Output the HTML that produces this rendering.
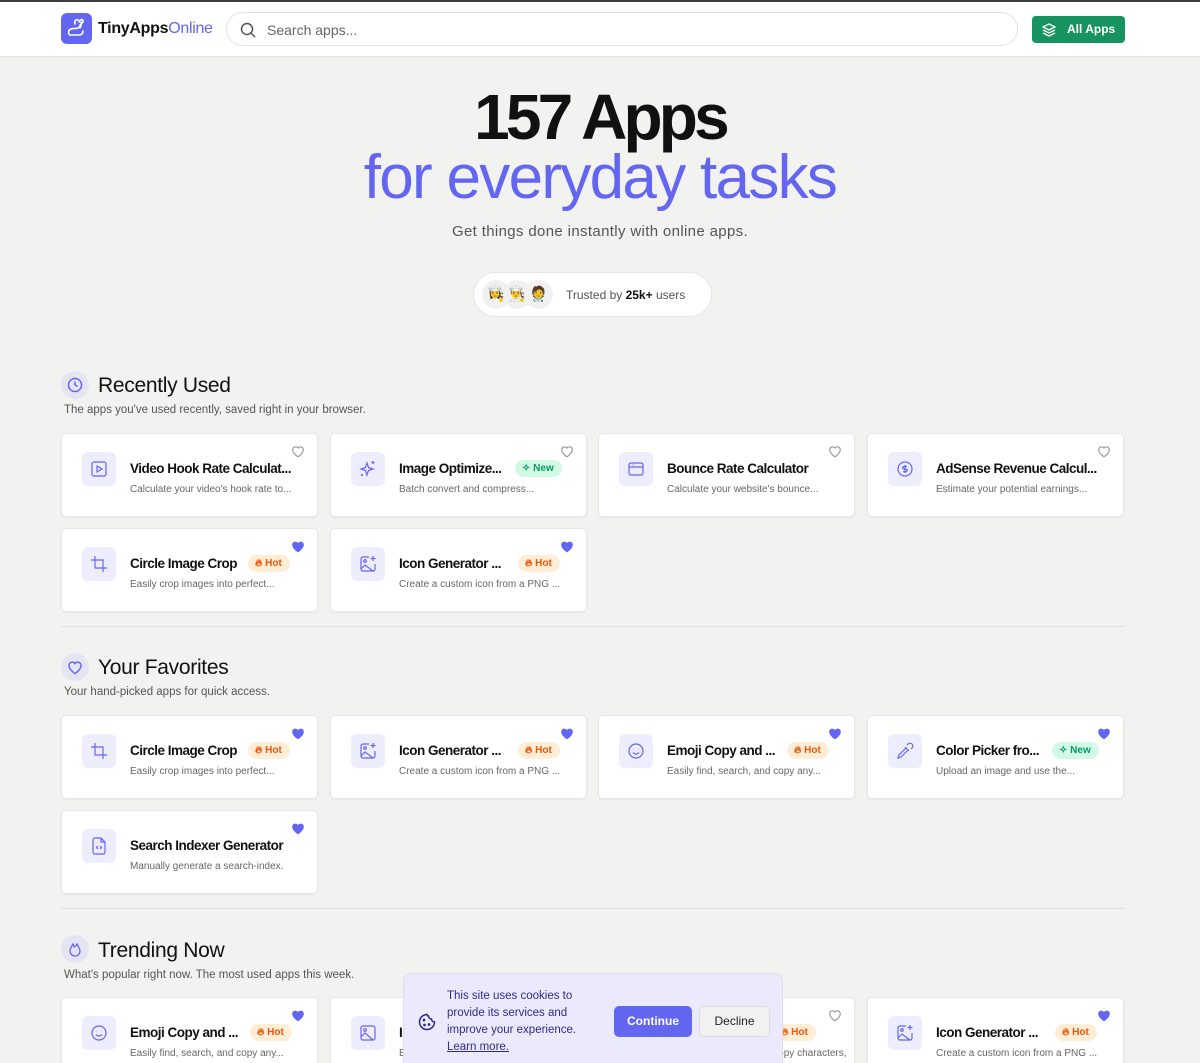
<!DOCTYPE html>
<html><head><meta charset="utf-8">
<style>
*{box-sizing:border-box;margin:0;padding:0}
html,body{width:1200px;height:1063px;overflow:hidden}
body{background:#f2f2f0;font-family:"Liberation Sans",sans-serif;color:#111;position:relative}
.abs{position:absolute}
.hdr{left:0;top:0;width:1200px;height:57px;background:#fff;border-top:2px solid #3b3f3b;border-bottom:1px solid #e3e3e3}
.logo{left:61px;top:13px;width:31px;height:31px;border-radius:6px;background:#6366f1}
.brand{left:98px;top:20px;font-size:16px;font-weight:700;letter-spacing:-.3px}
.brand span{color:#6366f1;font-weight:400}
.search{left:226px;top:12px;width:792px;height:34px;border:1px solid #e2e2e2;border-radius:17px;background:#fff}
.search span{position:absolute;left:40px;top:9px;font-size:14px;color:#666}
.allbtn{left:1032px;top:16px;width:93px;height:27px;background:#16935e;border-radius:4px;color:#fff;font-size:12px;font-weight:700}
.h1{left:0;width:1200px;text-align:center;top:82px;font-size:64px;font-weight:700;letter-spacing:-3.8px;line-height:70px}
.h2{left:0;width:1200px;text-align:center;top:143px;font-size:62px;color:#6366f1;letter-spacing:-1.7px;line-height:70px}
.sub{left:0;width:1200px;text-align:center;top:223px;font-size:15px;color:#555;letter-spacing:.35px}
.pill{left:473px;top:272px;width:239px;height:45px;background:#fff;border:1px solid #e6e6e6;border-radius:23px}
.av{position:absolute;top:7px;width:29px;height:29px;border-radius:50%;background:#f1f1f1;font-size:15px;text-align:center;line-height:29px}
.pill .t{position:absolute;left:92px;top:15px;font-size:12px;color:#555}
.pill b{color:#111}
.sh{font-size:21px;letter-spacing:-.3px;left:98px}
.sc{left:61px;width:28px;height:28px;border-radius:50%;background:#e4e4f3}
.ss{left:64px;font-size:11.5px;color:#555}
.div{left:61px;width:1064px;height:1px;background:#e0e0e0}
.card{position:absolute;width:257px;height:84px;background:#fff;border:1px solid #e6e6e6;border-radius:5px;box-shadow:0 1px 2px rgba(0,0,0,.05)}
.ic{position:absolute;left:20px;top:18px;width:34px;height:34px;border-radius:6px;background:#eeedfd}
.ic svg{position:absolute;left:8px;top:8px}
.ti{position:absolute;left:68px;top:27px;font-size:13.5px;font-weight:700;letter-spacing:-.5px;white-space:nowrap}
.de{position:absolute;left:68px;top:50px;font-size:10px;color:#666;white-space:nowrap}
.hr{position:absolute;right:12px;top:11px}
.bd{position:absolute;top:26px;height:17px;border-radius:9px;font-size:10px;line-height:17px;padding:0 8px 0 7px;font-weight:700}
.hot{background:#ffedd5;color:#ea580c}
.new{background:#d1fae5;color:#059669}
.cookie{left:403px;top:973px;width:380px;height:100px;background:#ebeafc;border:1px solid #dcdcf0;border-radius:8px}
</style></head><body>
<div class="abs hdr"></div>
<div class="abs logo"><svg width="31" height="31" viewBox="0 0 31 31" fill="none" stroke="#fff" stroke-width="1.6" stroke-linecap="round"><path d="M9 22c-2-1-2-5 1-6 2-1 5 0 7-1 3-1 4-4 3-6M14 11c-1-3 1-5 3-4M18 9c1-3 4-3 4-1 0 2-2 3-3 4M10 22h8c2 0 4-1 4-4"/><circle cx="19" cy="14" r=".6" fill="#fff"/></svg></div>
<div class="abs brand">TinyApps<span>Online</span></div>
<div class="abs search"><svg class="abs" style="left:13px;top:9px" width="16" height="16" viewBox="0 0 16 16" fill="none" stroke="#555" stroke-width="1.5"><circle cx="7" cy="7" r="5.5"/><path d="M11 11l4 4"/></svg><span>Search apps...</span></div>
<div class="abs allbtn"><svg class="abs" style="left:10px;top:7px" width="14" height="14" viewBox="0 0 14 14" fill="none" stroke="#fff" stroke-width="1.3"><path d="M7 1L1 4l6 3 6-3zM1 7l6 3 6-3M1 10l6 3 6-3"/></svg><span class="abs" style="left:35px;top:6px">All Apps</span></div>

<div class="abs h1">157 Apps</div>
<div class="abs h2">for everyday tasks</div>
<div class="abs sub">Get things done instantly with online apps.</div>
<div class="abs pill"><div class="av" style="left:8px">👩‍🍳</div><div class="av" style="left:29px">👨‍🍳</div><div class="av" style="left:50px">🧑‍⚕️</div><div class="t">Trusted by <b>25k+</b> users</div></div>

<!-- Recently Used -->
<div class="abs sc" style="top:371px"><svg style="position:absolute;left:6px;top:6px" width="16" height="16" viewBox="0 0 16 16" fill="none" stroke="#6366f1" stroke-width="1.5"><circle cx="8" cy="8" r="6.5"/><path d="M8 4.5V8l2.5 1.5"/></svg></div>
<div class="abs sh" style="top:374px">Recently Used</div>
<div class="abs ss" style="top:404px">The apps you've used recently, saved right in your browser.</div>

<div class="card" style="left:61px;top:433px"><div class="ic"><svg width="18" height="18" viewBox="0 0 18 18" fill="none" stroke="#6366f1" stroke-width="1.2"><rect x="2" y="2" width="14" height="14" rx="2"/><path d="M7 6l5 3-5 3z"/></svg></div><div class="ti">Video Hook Rate Calculat...</div><div class="de">Calculate your video's hook rate to...</div><svg class="hr" width="14" height="13" viewBox="0 0 24 22" fill="none" stroke="#999" stroke-width="2"><path d="M12 20s-9-5.5-9-12a5 5 0 0 1 9-3 5 5 0 0 1 9 3c0 6.5-9 12-9 12z"/></svg></div>
<div class="card" style="left:330px;top:433px"><div class="ic"><svg width="18" height="18" viewBox="0 0 18 18" fill="none" stroke="#6366f1" stroke-width="1.2"><path d="M8 3l1.5 4.5L14 9l-4.5 1.5L8 15l-1.5-4.5L2 9l4.5-1.5zM14 1v3M12.5 2.5h3M3 14v2M2 15h2"/></svg></div><div class="ti">Image Optimize...</div><span class="bd new" style="left:184px">✧ New</span><div class="de">Batch convert and compress...</div><svg class="hr" width="14" height="13" viewBox="0 0 24 22" fill="none" stroke="#999" stroke-width="2"><path d="M12 20s-9-5.5-9-12a5 5 0 0 1 9-3 5 5 0 0 1 9 3c0 6.5-9 12-9 12z"/></svg></div>
<div class="card" style="left:598px;top:433px"><div class="ic"><svg width="18" height="18" viewBox="0 0 18 18" fill="none" stroke="#6366f1" stroke-width="1.2"><rect x="2" y="3" width="14" height="12" rx="2"/><path d="M2 7h14M5 5h.5M7 5h.5"/></svg></div><div class="ti">Bounce Rate Calculator</div><div class="de">Calculate your website's bounce...</div><svg class="hr" width="14" height="13" viewBox="0 0 24 22" fill="none" stroke="#999" stroke-width="2"><path d="M12 20s-9-5.5-9-12a5 5 0 0 1 9-3 5 5 0 0 1 9 3c0 6.5-9 12-9 12z"/></svg></div>
<div class="card" style="left:867px;top:433px"><div class="ic"><svg width="18" height="18" viewBox="0 0 18 18" fill="none" stroke="#6366f1" stroke-width="1.2"><circle cx="9" cy="9" r="7"/><path d="M11 6.5H8a1.3 1.3 0 0 0 0 2.6h2a1.3 1.3 0 0 1 0 2.6H7M9 5v8"/></svg></div><div class="ti">AdSense Revenue Calcul...</div><div class="de">Estimate your potential earnings...</div><svg class="hr" width="14" height="13" viewBox="0 0 24 22" fill="none" stroke="#999" stroke-width="2"><path d="M12 20s-9-5.5-9-12a5 5 0 0 1 9-3 5 5 0 0 1 9 3c0 6.5-9 12-9 12z"/></svg></div>

<div class="card" style="left:61px;top:528px"><div class="ic"><svg width="18" height="18" viewBox="0 0 18 18" fill="none" stroke="#6366f1" stroke-width="1.2"><path d="M5 1v12h12M1 5h12v12"/></svg></div><div class="ti">Circle Image Crop</div><span class="bd hot" style="left:186px">🔥︎ Hot</span><div class="de">Easily crop images into perfect...</div><svg class="hr" width="14" height="13" viewBox="0 0 24 22" fill="#6366f1"><path d="M12 21s-10-6-10-13a5.5 5.5 0 0 1 10-3 5.5 5.5 0 0 1 10 3c0 7-10 13-10 13z"/></svg></div>
<div class="card" style="left:330px;top:528px"><div class="ic"><svg width="18" height="18" viewBox="0 0 18 18" fill="none" stroke="#6366f1" stroke-width="1.2"><path d="M10 2H4a2 2 0 0 0-2 2v10a2 2 0 0 0 2 2h10a2 2 0 0 0 2-2V9M2 14l4-4 8 6M14 1v5M11.5 3.5h5"/><circle cx="6" cy="6" r="1.3"/></svg></div><div class="ti">Icon Generator ...</div><span class="bd hot" style="left:187px">🔥︎ Hot</span><div class="de">Create a custom icon from a PNG ...</div><svg class="hr" width="14" height="13" viewBox="0 0 24 22" fill="#6366f1"><path d="M12 21s-10-6-10-13a5.5 5.5 0 0 1 10-3 5.5 5.5 0 0 1 10 3c0 7-10 13-10 13z"/></svg></div>

<div class="abs div" style="top:626px"></div>

<!-- Favorites -->
<div class="abs sc" style="top:653px"><svg style="position:absolute;left:6px;top:7px" width="16" height="15" viewBox="0 0 24 22" fill="none" stroke="#6366f1" stroke-width="2.2"><path d="M12 20s-9-5.5-9-12a5 5 0 0 1 9-3 5 5 0 0 1 9 3c0 6.5-9 12-9 12z"/></svg></div>
<div class="abs sh" style="top:656px">Your Favorites</div>
<div class="abs ss" style="top:686px">Your hand-picked apps for quick access.</div>

<div class="card" style="left:61px;top:715px"><div class="ic"><svg width="18" height="18" viewBox="0 0 18 18" fill="none" stroke="#6366f1" stroke-width="1.2"><path d="M5 1v12h12M1 5h12v12"/></svg></div><div class="ti">Circle Image Crop</div><span class="bd hot" style="left:186px">🔥︎ Hot</span><div class="de">Easily crop images into perfect...</div><svg class="hr" width="14" height="13" viewBox="0 0 24 22" fill="#6366f1"><path d="M12 21s-10-6-10-13a5.5 5.5 0 0 1 10-3 5.5 5.5 0 0 1 10 3c0 7-10 13-10 13z"/></svg></div>
<div class="card" style="left:330px;top:715px"><div class="ic"><svg width="18" height="18" viewBox="0 0 18 18" fill="none" stroke="#6366f1" stroke-width="1.2"><path d="M10 2H4a2 2 0 0 0-2 2v10a2 2 0 0 0 2 2h10a2 2 0 0 0 2-2V9M2 14l4-4 8 6M14 1v5M11.5 3.5h5"/><circle cx="6" cy="6" r="1.3"/></svg></div><div class="ti">Icon Generator ...</div><span class="bd hot" style="left:187px">🔥︎ Hot</span><div class="de">Create a custom icon from a PNG ...</div><svg class="hr" width="14" height="13" viewBox="0 0 24 22" fill="#6366f1"><path d="M12 21s-10-6-10-13a5.5 5.5 0 0 1 10-3 5.5 5.5 0 0 1 10 3c0 7-10 13-10 13z"/></svg></div>
<div class="card" style="left:598px;top:715px"><div class="ic"><svg width="18" height="18" viewBox="0 0 18 18" fill="none" stroke="#6366f1" stroke-width="1.2"><circle cx="9" cy="9" r="7"/><path d="M6 10.5c1.5 2 4.5 2 6 0M6.5 7h.3M11.2 7h.3"/></svg></div><div class="ti">Emoji Copy and ...</div><span class="bd hot" style="left:188px">🔥︎ Hot</span><div class="de">Easily find, search, and copy any...</div><svg class="hr" width="14" height="13" viewBox="0 0 24 22" fill="#6366f1"><path d="M12 21s-10-6-10-13a5.5 5.5 0 0 1 10-3 5.5 5.5 0 0 1 10 3c0 7-10 13-10 13z"/></svg></div>
<div class="card" style="left:867px;top:715px"><div class="ic"><svg width="18" height="18" viewBox="0 0 18 18" fill="none" stroke="#6366f1" stroke-width="1.2"><path d="M2 16l1-3 7-7 2 2-7 7zM9 5l4 4M11 3l1-1a1.5 1.5 0 0 1 4 4l-1 1"/></svg></div><div class="ti">Color Picker fro...</div><span class="bd new" style="left:184px">✧ New</span><div class="de">Upload an image and use the...</div><svg class="hr" width="14" height="13" viewBox="0 0 24 22" fill="#6366f1"><path d="M12 21s-10-6-10-13a5.5 5.5 0 0 1 10-3 5.5 5.5 0 0 1 10 3c0 7-10 13-10 13z"/></svg></div>
<div class="card" style="left:61px;top:810px"><div class="ic"><svg width="18" height="18" viewBox="0 0 18 18" fill="none" stroke="#6366f1" stroke-width="1.2"><path d="M11 1H5a2 2 0 0 0-2 2v12a2 2 0 0 0 2 2h8a2 2 0 0 0 2-2V5zM11 1v4h4M8 9l-1.5 1.5L8 12M10 9l1.5 1.5L10 12"/></svg></div><div class="ti">Search Indexer Generator</div><div class="de">Manually generate a search-index.</div><svg class="hr" width="14" height="13" viewBox="0 0 24 22" fill="#6366f1"><path d="M12 21s-10-6-10-13a5.5 5.5 0 0 1 10-3 5.5 5.5 0 0 1 10 3c0 7-10 13-10 13z"/></svg></div>

<div class="abs div" style="top:908px"></div>

<!-- Trending -->
<div class="abs sc" style="top:935px"><svg style="position:absolute;left:7px;top:6px" width="14" height="16" viewBox="0 0 14 16" fill="none" stroke="#6366f1" stroke-width="1.3"><path d="M7 15a5 5 0 0 0 5-5c0-3-2-4-3-7-1 2-2 3-3 3 0-1 0-2-1-3C4 5 2 7 2 10a5 5 0 0 0 5 5z"/></svg></div>
<div class="abs sh" style="top:939px">Trending Now</div>
<div class="abs ss" style="top:969px">What's popular right now. The most used apps this week.</div>

<div class="card" style="left:61px;top:997px"><div class="ic"><svg width="18" height="18" viewBox="0 0 18 18" fill="none" stroke="#6366f1" stroke-width="1.2"><circle cx="9" cy="9" r="7"/><path d="M6 10.5c1.5 2 4.5 2 6 0M6.5 7h.3M11.2 7h.3"/></svg></div><div class="ti">Emoji Copy and ...</div><span class="bd hot" style="left:188px">🔥︎ Hot</span><div class="de">Easily find, search, and copy any...</div><svg class="hr" width="14" height="13" viewBox="0 0 24 22" fill="#6366f1"><path d="M12 21s-10-6-10-13a5.5 5.5 0 0 1 10-3 5.5 5.5 0 0 1 10 3c0 7-10 13-10 13z"/></svg></div>
<div class="card" style="left:330px;top:997px"><div class="ic"><svg width="18" height="18" viewBox="0 0 18 18" fill="none" stroke="#6366f1" stroke-width="1.2"><rect x="2" y="2" width="14" height="14" rx="2"/><path d="M2 13l4-4 8 7"/><circle cx="6" cy="6" r="1.3"/></svg></div><div class="ti">Image</div><div class="de">Batch</div></div>
<div class="card" style="left:598px;top:997px"><div class="ti">Emoji Copy and ...</div><span class="bd hot" style="left:175px">🔥︎ Hot</span><div class="de">Easily find, search, and copy characters,</div><svg class="hr" width="14" height="13" viewBox="0 0 24 22" fill="none" stroke="#999" stroke-width="2"><path d="M12 20s-9-5.5-9-12a5 5 0 0 1 9-3 5 5 0 0 1 9 3c0 6.5-9 12-9 12z"/></svg></div>
<div class="card" style="left:867px;top:997px"><div class="ic"><svg width="18" height="18" viewBox="0 0 18 18" fill="none" stroke="#6366f1" stroke-width="1.2"><path d="M10 2H4a2 2 0 0 0-2 2v10a2 2 0 0 0 2 2h10a2 2 0 0 0 2-2V9M2 14l4-4 8 6M14 1v5M11.5 3.5h5"/><circle cx="6" cy="6" r="1.3"/></svg></div><div class="ti">Icon Generator ...</div><span class="bd hot" style="left:187px">🔥︎ Hot</span><div class="de">Create a custom icon from a PNG ...</div><svg class="hr" width="14" height="13" viewBox="0 0 24 22" fill="#6366f1"><path d="M12 21s-10-6-10-13a5.5 5.5 0 0 1 10-3 5.5 5.5 0 0 1 10 3c0 7-10 13-10 13z"/></svg></div>

<div class="abs cookie">
<svg class="abs" style="left:14px;top:39px" width="18" height="18" viewBox="0 0 18 18" fill="none" stroke="#2e2a8a" stroke-width="1.5"><path d="M9 1.5a7.5 7.5 0 1 0 7.5 7.5 3 3 0 0 1-3-3 3 3 0 0 1-3-3 1.5 1.5 0 0 1-1.5-1.5z"/><circle cx="6" cy="7" r=".6" fill="#2e2a8a"/><circle cx="11" cy="11.5" r=".6" fill="#2e2a8a"/><circle cx="6.5" cy="12" r=".6" fill="#2e2a8a"/></svg>
<div class="abs" style="left:43px;top:14px;font-size:11.5px;line-height:17px;color:#2e2a8a;width:150px">This site uses cookies to provide its services and improve your experience. <u>Learn more.</u></div>
<div class="abs" style="left:210px;top:32px;width:78px;height:31px;background:#6366f1;border-radius:5px;color:#fff;font-size:12px;font-weight:700;text-align:center;line-height:31px">Continue</div>
<div class="abs" style="left:295px;top:32px;width:71px;height:31px;background:#f1f1f1;border:1px solid #ddd;border-radius:5px;color:#222;font-size:12px;text-align:center;line-height:29px">Decline</div>
</div>
</body></html>
